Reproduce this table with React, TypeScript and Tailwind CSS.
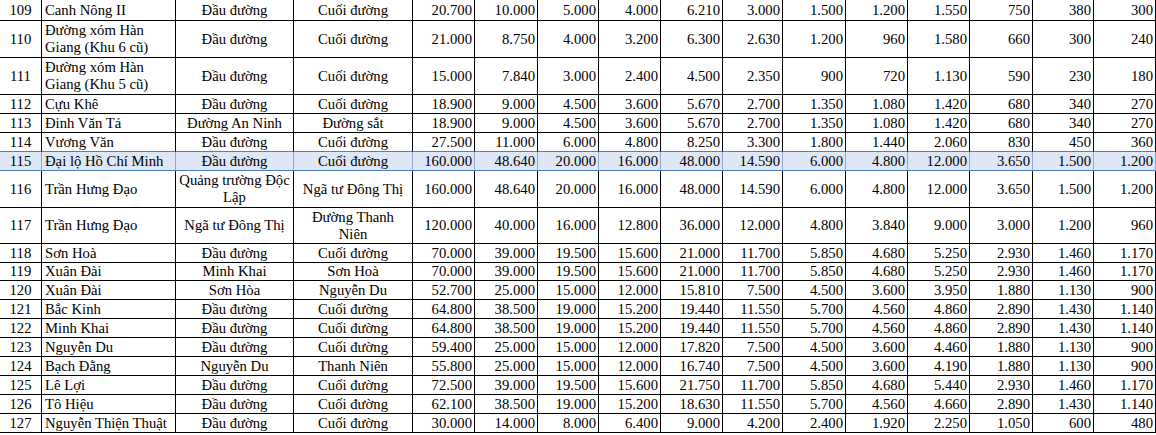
import React from 'react';

type Row = {
  no: number;
  name: string;
  from: string;
  to: string;
  prices: string[];
  h: string;
};

// column widths incl. the 1px right border
const numCols = [
  'w-[62px]', 'w-[63px]', 'w-[61px]', 'w-[62px]', 'w-[62px]', 'w-[60px]',
  'w-[63px]', 'w-[62px]', 'w-[62px]', 'w-[63px]', 'w-[61px]', 'w-[62px]',
];

const rows: Row[] = [
  {no: 109, name: 'Canh Nông II', from: 'Đầu đường', to: 'Cuối đường', h: 'h-[21px]',
    prices: ['20.700', '10.000', '5.000', '4.000', '6.210', '3.000', '1.500', '1.200', '1.550', '750', '380', '300']},
  {no: 110, name: 'Đường xóm Hàn\nGiang (Khu 6 cũ)', from: 'Đầu đường', to: 'Cuối đường', h: 'h-[37px]',
    prices: ['21.000', '8.750', '4.000', '3.200', '6.300', '2.630', '1.200', '960', '1.580', '660', '300', '240']},
  {no: 111, name: 'Đường xóm Hàn\nGiang (Khu 5 cũ)', from: 'Đầu đường', to: 'Cuối đường', h: 'h-[37px]',
    prices: ['15.000', '7.840', '3.000', '2.400', '4.500', '2.350', '900', '720', '1.130', '590', '230', '180']},
  {no: 112, name: 'Cựu Khê', from: 'Đầu đường', to: 'Cuối đường', h: 'h-[19px]',
    prices: ['18.900', '9.000', '4.500', '3.600', '5.670', '2.700', '1.350', '1.080', '1.420', '680', '340', '270']},
  {no: 113, name: 'Đinh Văn Tả', from: 'Đường An Ninh', to: 'Đường sắt', h: 'h-[19px]',
    prices: ['18.900', '9.000', '4.500', '3.600', '5.670', '2.700', '1.350', '1.080', '1.420', '680', '340', '270']},
  {no: 114, name: 'Vương Văn', from: 'Đầu đường', to: 'Cuối đường', h: 'h-[19px]',
    prices: ['27.500', '11.000', '6.000', '4.800', '8.250', '3.300', '1.800', '1.440', '2.060', '830', '450', '360']},
  {no: 115, name: 'Đại lộ Hồ Chí Minh', from: 'Đầu đường', to: 'Cuối đường', h: 'h-[19px]',
    prices: ['160.000', '48.640', '20.000', '16.000', '48.000', '14.590', '6.000', '4.800', '12.000', '3.650', '1.500', '1.200']},
  {no: 116, name: 'Trần Hưng Đạo', from: 'Quảng trường Độc\nLập', to: 'Ngã tư Đông Thị', h: 'h-[37px]',
    prices: ['160.000', '48.640', '20.000', '16.000', '48.000', '14.590', '6.000', '4.800', '12.000', '3.650', '1.500', '1.200']},
  {no: 117, name: 'Trần Hưng Đạo', from: 'Ngã tư Đông Thị', to: 'Đường Thanh\nNiên', h: 'h-[36px]',
    prices: ['120.000', '40.000', '16.000', '12.800', '36.000', '12.000', '4.800', '3.840', '9.000', '3.000', '1.200', '960']},
  {no: 118, name: 'Sơn Hoà', from: 'Đầu đường', to: 'Cuối đường', h: 'h-[19px]',
    prices: ['70.000', '39.000', '19.500', '15.600', '21.000', '11.700', '5.850', '4.680', '5.250', '2.930', '1.460', '1.170']},
  {no: 119, name: 'Xuân Đài', from: 'Minh Khai', to: 'Sơn Hoà', h: 'h-[18px]',
    prices: ['70.000', '39.000', '19.500', '15.600', '21.000', '11.700', '5.850', '4.680', '5.250', '2.930', '1.460', '1.170']},
  {no: 120, name: 'Xuân Đài', from: 'Sơn Hòa', to: 'Nguyễn Du', h: 'h-[19px]',
    prices: ['52.700', '25.000', '15.000', '12.000', '15.810', '7.500', '4.500', '3.600', '3.950', '1.880', '1.130', '900']},
  {no: 121, name: 'Bắc Kinh', from: 'Đầu đường', to: 'Cuối đường', h: 'h-[19px]',
    prices: ['64.800', '38.500', '19.000', '15.200', '19.440', '11.550', '5.700', '4.560', '4.860', '2.890', '1.430', '1.140']},
  {no: 122, name: 'Minh Khai', from: 'Đầu đường', to: 'Cuối đường', h: 'h-[19px]',
    prices: ['64.800', '38.500', '19.000', '15.200', '19.440', '11.550', '5.700', '4.560', '4.860', '2.890', '1.430', '1.140']},
  {no: 123, name: 'Nguyễn Du', from: 'Đầu đường', to: 'Cuối đường', h: 'h-[19px]',
    prices: ['59.400', '25.000', '15.000', '12.000', '17.820', '7.500', '4.500', '3.600', '4.460', '1.880', '1.130', '900']},
  {no: 124, name: 'Bạch Đằng', from: 'Nguyễn Du', to: 'Thanh Niên', h: 'h-[19px]',
    prices: ['55.800', '25.000', '15.000', '12.000', '16.740', '7.500', '4.500', '3.600', '4.190', '1.880', '1.130', '900']},
  {no: 125, name: 'Lê Lợi', from: 'Đầu đường', to: 'Cuối đường', h: 'h-[19px]',
    prices: ['72.500', '39.000', '19.500', '15.600', '21.750', '11.700', '5.850', '4.680', '5.440', '2.930', '1.460', '1.170']},
  {no: 126, name: 'Tô Hiệu', from: 'Đầu đường', to: 'Cuối đường', h: 'h-[19px]',
    prices: ['62.100', '38.500', '19.000', '15.200', '18.630', '11.550', '5.700', '4.560', '4.660', '2.890', '1.430', '1.140']},
  {no: 127, name: 'Nguyễn Thiện Thuật', from: 'Đầu đường', to: 'Cuối đường', h: 'h-[19px]',
    prices: ['30.000', '14.000', '8.000', '6.400', '9.000', '4.200', '2.400', '1.920', '2.250', '1.050', '600', '480']},
];

const SELECTED = 115;

const PriceRow = ({row}: {row: Row}) => {
  const selected = row.no === SELECTED;
  const beforeSelected = row.no === SELECTED - 1;
  const bottom = selected || beforeSelected ? 'border-b-[#4f7fc0]' : 'border-b-black';
  const right = selected ? 'border-r-[#8fa9d2]' : 'border-r-black';
  const cell = `flex items-center shrink-0 border-b border-r ${bottom} ${right}`;

  return (
    <div className={`flex ${row.h} ${selected ? 'bg-[#dde7f5]' : 'bg-white'}`}>
      <div className={`${cell} w-[42px] justify-center`}>{row.no}</div>
      <div className={`${cell} w-[134px] pl-[3px] whitespace-pre-line`}>{row.name}</div>
      <div className={`${cell} w-[118px] justify-center text-center whitespace-pre-line`}>{row.from}</div>
      <div className={`${cell} w-[119px] justify-center text-center whitespace-pre-line`}>{row.to}</div>
      {row.prices.map((p, i) => (
        <div key={i} className={`${cell} ${numCols[i]} justify-end pr-[2px]`}>{p}</div>
      ))}
    </div>
  );
};

export default function App() {
  return (
    <div className="w-[1156px] h-[435px] overflow-hidden bg-white text-black text-[14.7px] leading-[17px] font-['Liberation_Serif','Times_New_Roman',serif]">
      {rows.map((row) => (
        <PriceRow key={row.no} row={row}/>
      ))}
    </div>
  );
}
